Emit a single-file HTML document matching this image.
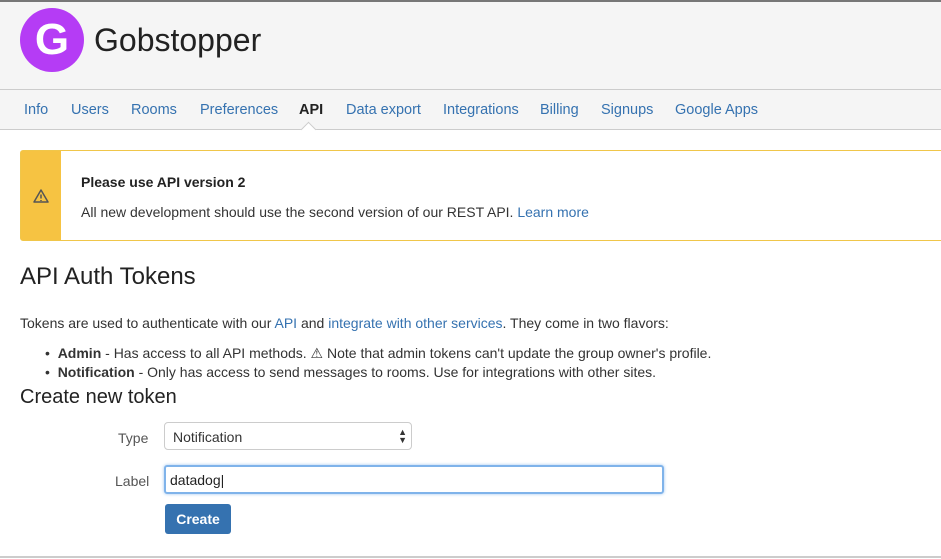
<!DOCTYPE html>
<html><head><style>
body{margin:0;width:941px;height:559px;overflow:hidden;background:#fff;font-family:"Liberation Sans",sans-serif;color:#333;position:relative;font-size:14px}
.top{position:absolute;left:0;top:0;width:941px;height:90px;background:#f5f5f5;border-top:2px solid #777;box-sizing:border-box;border-bottom:1px solid #ccc}
.logo{position:absolute;left:20px;top:6px;width:64px;height:64px;border-radius:50%;background:#b53cf5;color:#fff;font-size:44px;font-weight:bold;text-align:center;line-height:64px}
.title{position:absolute;left:94px;top:20px;font-size:32px;color:#222}
.nav{position:absolute;left:0;top:90px;width:941px;height:39px;background:#f5f5f5;border-bottom:1px solid #ccc}
.nav span{position:absolute;top:12px;color:#3572b0;font-size:14.5px}
.arrow{position:absolute;left:303px;top:124px;width:10px;height:10px;background:#fff;border-left:1px solid #ccc;border-top:1px solid #ccc;transform:rotate(45deg)}
.alert{position:absolute;left:20px;top:150px;width:930px;height:91px;border:1px solid #f0c64a;border-radius:3px;box-sizing:border-box}
.strip{position:absolute;left:0;top:0;width:40px;height:100%;background:#f6c342}
a{color:#3572b0;text-decoration:none}
.t{position:absolute;white-space:nowrap}
.sel{position:absolute;left:164px;top:422px;width:248px;height:28px;border:1px solid #ccc;border-radius:4px;box-sizing:border-box}
.inp{position:absolute;left:164px;top:465px;width:500px;height:29px;border:2px solid #7fb3ea;border-radius:3px;box-sizing:border-box;box-shadow:0 0 3px #9cc5f0}
.btn{position:absolute;left:165px;top:504px;width:66px;height:30px;background:#3572b0;border-radius:3px;color:#fff;font-weight:bold;text-align:center;line-height:30px;font-size:14px}
</style></head><body>
<div class="top"><div class="logo">G</div><div class="title">Gobstopper</div></div>
<div class="nav">
<span style="left:24px">Info</span><span style="left:71px">Users</span><span style="left:131px">Rooms</span><span style="left:200px">Preferences</span><span style="left:299px;color:#222;font-weight:bold">API</span><span style="left:346px">Data export</span><span style="left:443px">Integrations</span><span style="left:540px">Billing</span><span style="left:601px">Signups</span><span style="left:675px">Google Apps</span>
</div>
<div class="arrow"></div>
<div class="alert"><div class="strip"><svg width="16" height="16" viewBox="0 0 16 16" style="position:absolute;left:12px;top:37px"><path d="M8 2L15 14H1Z" fill="none" stroke="#555" stroke-width="1.5" stroke-linejoin="round"/><path d="M8 6.5v4M8 12v1" stroke="#555" stroke-width="1.5"/></svg></div>
<div class="t" style="left:60px;top:23px;font-weight:bold;font-size:14px;color:#222">Please use API version 2</div>
<div class="t" style="left:60px;top:53px">All new development should use the second version of our REST API. <a>Learn more</a></div></div>
<div class="t" style="left:20px;top:263px;font-size:24px;color:#222">API Auth Tokens</div>
<div class="t" style="left:20px;top:315px">Tokens are used to authenticate with our <a>API</a> and <a>integrate with other services</a>. They come in two flavors:</div>
<div class="t" style="left:45px;top:345px">•&nbsp; <b>Admin</b> - Has access to all API methods. ⚠ Note that admin tokens can't update the group owner's profile.</div>
<div class="t" style="left:45px;top:364px">•&nbsp; <b>Notification</b> - Only has access to send messages to rooms. Use for integrations with other sites.</div>
<div class="t" style="left:20px;top:386px;font-size:20px;color:#222">Create new token</div>
<div class="t" style="left:118px;top:430px;color:#555">Type</div>
<div class="sel"><span class="t" style="left:8px;top:6px">Notification</span><span class="t" style="right:4px;top:5px;font-size:9px;line-height:8px">▲<br>▼</span></div>
<div class="t" style="left:115px;top:473px;color:#555">Label</div>
<div class="inp"><span class="t" style="left:4px;top:5px;color:#222">datadog|</span></div>
<div class="btn">Create</div>
<div style="position:absolute;left:0;top:556px;width:941px;height:2px;background:#ccc"></div>
</body></html>
